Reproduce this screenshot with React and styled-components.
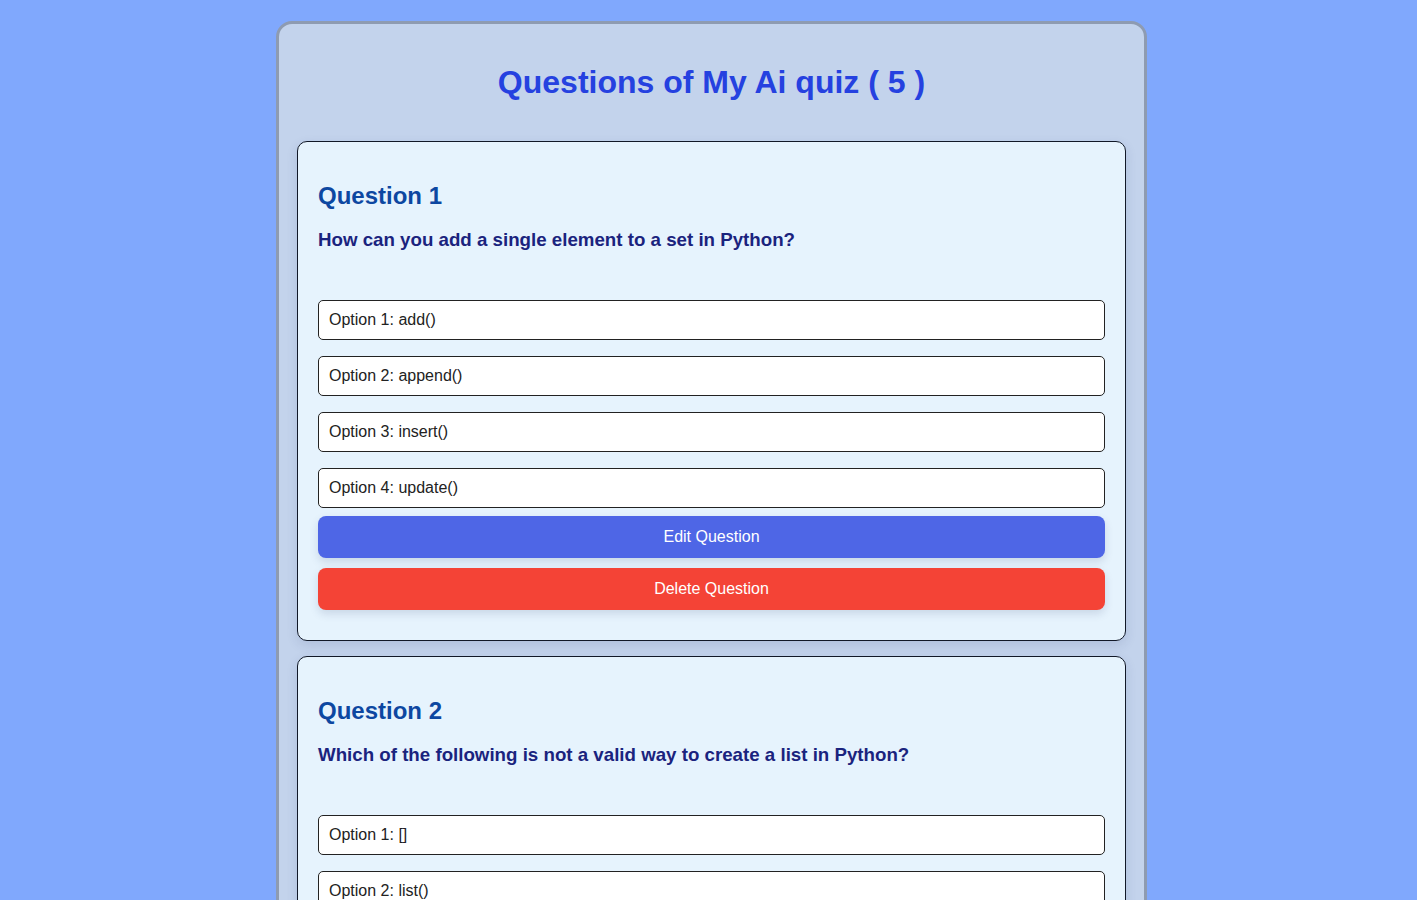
import React from "react"
import styled, { createGlobalStyle } from "styled-components"

const GlobalStyle = createGlobalStyle`
  body {
    margin: 0;
    background-color: #80a8fd;
    font-family: "Liberation Sans", Arial, sans-serif;
  }
`

const Page = styled.div`
  display: flex;
  justify-content: center;
  padding: 21px 0 40px 6px;
`

const Container = styled.div`
  width: 829px;
  padding: 20px 18px;
  background-color: #c3d3ec;
  border: 3px solid #8e9bb1;
  border-radius: 16px;
`

const Title = styled.h1`
  margin: 20px 0 40px;
  text-align: center;
  font-size: 32px;
  font-weight: bold;
  color: #2541e0;
`

const Card = styled.div`
  padding: 20px 20px 30px;
  margin-bottom: 15px;
  background-color: #e6f3fd;
  border: 1px solid #111827;
  border-radius: 10px;
  box-shadow: 0 4px 12px rgba(30, 50, 100, 0.12);
`

const QuestionTitle = styled.h2`
  margin: 20px 0 19px;
  font-size: 24px;
  font-weight: bold;
  color: #0d47a1;
`

const QuestionText = styled.h3`
  margin: 0 0 49px;
  font-size: 18.72px;
  font-weight: bold;
  color: #1a237e;
`

const Options = styled.div`
  display: flex;
  flex-direction: column;
  gap: 16px;
  margin-bottom: 8px;
`

const Option = styled.div`
  box-sizing: border-box;
  height: 40px;
  display: flex;
  align-items: center;
  padding: 0 10px;
  background-color: #ffffff;
  border: 1px solid #222;
  border-radius: 5px;
  font-size: 16px;
  color: #222;
`

const Button = styled.button`
  display: block;
  width: 100%;
  height: 42px;
  margin-top: ${(props) => (props.danger ? "10px" : "0")};
  background-color: ${(props) => (props.danger ? "#f44336" : "#4e66e6")};
  color: white;
  border: none;
  border-radius: 8px;
  font-family: "Liberation Sans", Arial, sans-serif;
  font-size: 16px;
  cursor: pointer;
  box-shadow: 0 4px 8px rgba(40, 60, 110, 0.15);
`

const questions = [
  {
    text: "How can you add a single element to a set in Python?",
    options: ["add()", "append()", "insert()", "update()"],
  },
  {
    text: "Which of the following is not a valid way to create a list in Python?",
    options: ["[]", "list()", "{}", "list([])"],
  },
]

const App = () => {
  return (
    <>
      <GlobalStyle />
      <Page>
        <Container>
          <Title>Questions of My Ai quiz ( 5 )</Title>
          {questions.map((q, i) => (
            <Card key={i}>
              <QuestionTitle>Question {i + 1}</QuestionTitle>
              <QuestionText>{q.text}</QuestionText>
              <Options>
                {q.options.map((opt, j) => (
                  <Option key={j}>
                    Option {j + 1}: {opt}
                  </Option>
                ))}
              </Options>
              <Button>Edit Question</Button>
              <Button danger>Delete Question</Button>
            </Card>
          ))}
        </Container>
      </Page>
    </>
  )
}

export default App
